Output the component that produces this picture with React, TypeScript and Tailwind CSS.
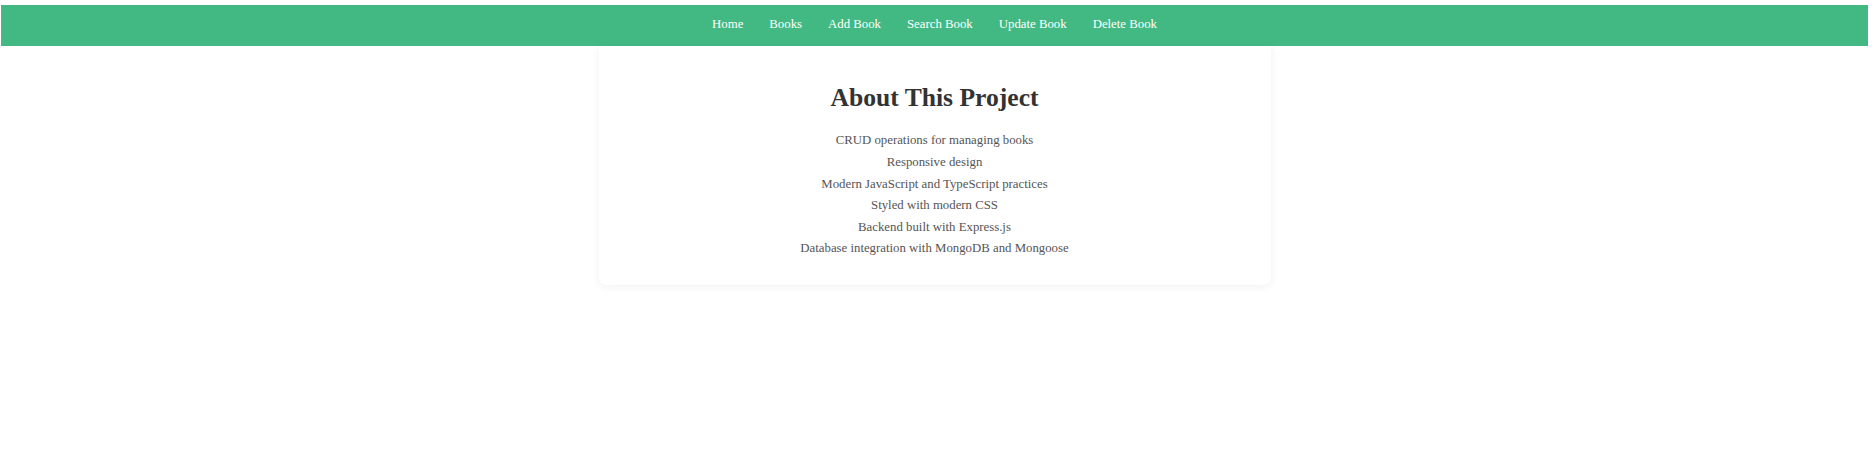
const links = ['Home', 'Books', 'Add Book', 'Search Book', 'Update Book', 'Delete Book']

const features = [
  'CRUD operations for managing books',
  'Responsive design',
  'Modern JavaScript and TypeScript practices',
  'Styled with modern CSS',
  'Backend built with Express.js',
  'Database integration with MongoDB and Mongoose',
]

export default function App() {
  return (
    <div className="min-h-screen bg-white font-['Liberation_Serif',serif]">
      <div className="ml-px mr-[6px] pt-[5px]">
        <nav className="flex h-[41px] items-center justify-center gap-[26px] bg-[#42b983] pb-[2px]">
          {links.map((link) => (
            <a key={link} href="#" className="text-[12.8px] leading-[15px] text-white">
              {link}
            </a>
          ))}
        </nav>

        <div className="mx-auto w-[672px] rounded-b-lg bg-white pt-[37px] pb-[25px] text-center shadow-[0_2px_10px_rgba(0,0,0,0.06)]">
          <h1 className="text-[25.6px] font-bold leading-[29.4px] text-[#333]">About This Project</h1>
          <ul className="mt-[18px]">
            {features.map((f) => (
              <li key={f} className="text-[12.8px] leading-[21.6px] text-[#555]">
                {f}
              </li>
            ))}
          </ul>
        </div>
      </div>
    </div>
  )
}
